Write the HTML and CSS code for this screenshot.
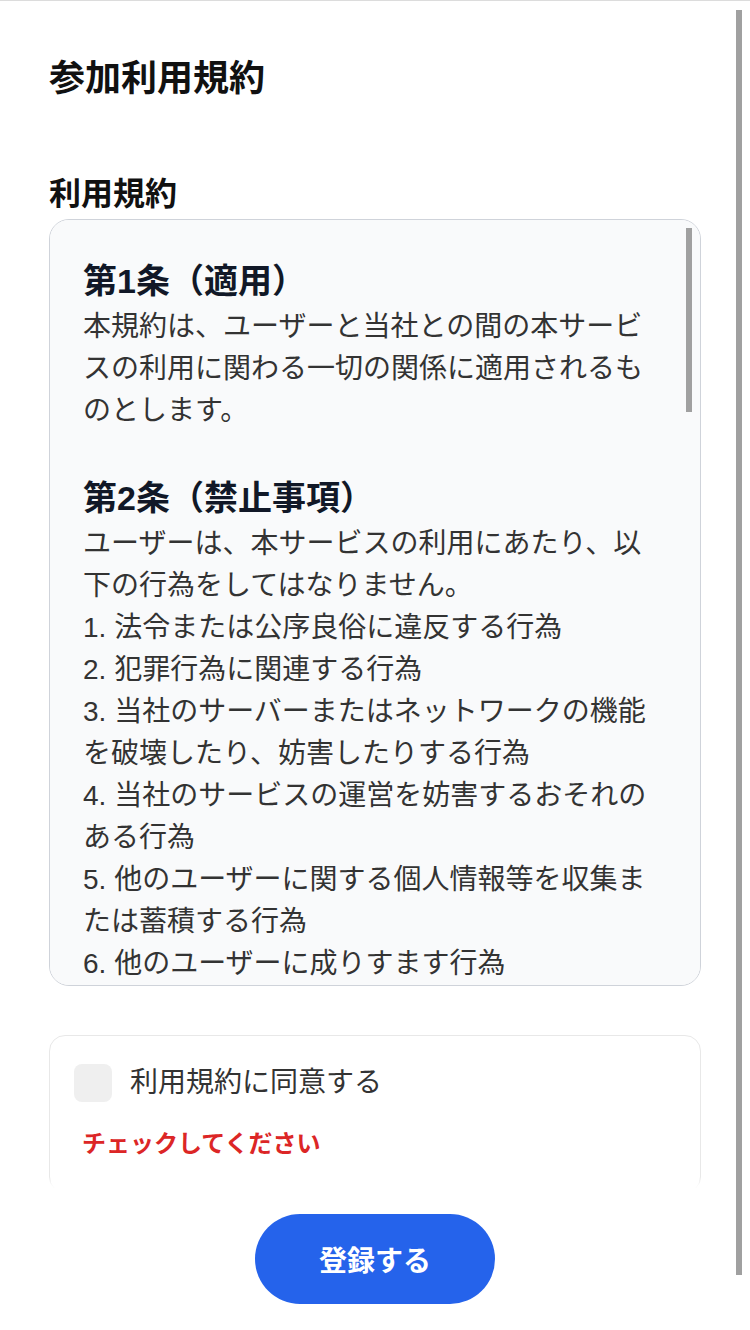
FILE: index.html
```html
<!DOCTYPE html>
<html lang="ja">
<head>
<meta charset="utf-8">
<title>参加利用規約</title>
<link rel="stylesheet" href="styles.css">
</head>
<body>
<main class="page">
  <h1 class="title">参加利用規約</h1>
  <h2 class="label">利用規約</h2>
  <div class="terms-wrap">
    <div class="terms">
      <section class="article">
        <h3 class="article-title">第1条（適用）</h3>
        <p class="text">本規約は、ユーザーと当社との間の本サービスの利用に関わる一切の関係に適用されるものとします。</p>
      </section>
      <section class="article">
        <h3 class="article-title">第2条（禁止事項）</h3>
        <p class="text">ユーザーは、本サービスの利用にあたり、以下の行為をしてはなりません。</p>
        <p class="text">1. 法令または公序良俗に違反する行為</p>
        <p class="text">2. 犯罪行為に関連する行為</p>
        <p class="text">3. 当社のサーバーまたはネットワークの機能を破壊したり、妨害したりする行為</p>
        <p class="text">4. 当社のサービスの運営を妨害するおそれのある行為</p>
        <p class="text">5. 他のユーザーに関する個人情報等を収集または蓄積する行為</p>
        <p class="text">6. 他のユーザーに成りすます行為</p>
        <p class="text">7. 当社のサービスに関連して、反社会的勢力に対して直接または間接に利益を供与する行為</p>
        <p class="text">8. その他、当社が不適切と判断する行為</p>
      </section>
      <section class="article">
        <h3 class="article-title">第3条（本サービスの提供の停止等）</h3>
        <p class="text">当社は、以下のいずれかの事由があると判断した場合、ユーザーに事前に通知することなく本サービスの全部または一部の提供を停止または中断することができるものとします。</p>
        <p class="text">1. 本サービスにかかるコンピュータシステムの保守点検または更新を行う場合</p>
        <p class="text">2. 地震、落雷、火災、停電または天災などの不可抗力により、本サービスの提供が困難となった場合</p>
        <p class="text">3. コンピュータまたは通信回線等が事故により停止した場合</p>
        <p class="text">4. その他、当社が本サービスの提供が困難と判断した場合</p>
      </section>
      <section class="article">
        <h3 class="article-title">第4条（利用制限および登録抹消）</h3>
        <p class="text">当社は、ユーザーが以下のいずれかに該当する場合には、事前の通知なく、ユーザーに対して、本サービスの全部もしくは一部の利用を制限し、またはユーザーとしての登録を抹消することができるものとします。</p>
        <p class="text">1. 本規約のいずれかの条項に違反した場合</p>
        <p class="text">2. 登録事項に虚偽の事実があることが判明した場合</p>
        <p class="text">3. その他、当社が本サービスの利用を適当でないと判断した場合</p>
      </section>
      <section class="article">
        <h3 class="article-title">第5条（免責事項）</h3>
        <p class="text">当社は、本サービスに事実上または法律上の瑕疵がないことを明示的にも黙示的にも保証しておりません。</p>
        <p class="text">当社は、本サービスに起因してユーザーに生じたあらゆる損害について一切の責任を負いません。</p>
      </section>
      <section class="article">
        <h3 class="article-title">第6条（サービス内容の変更等）</h3>
        <p class="text">当社は、ユーザーに通知することなく、本サービスの内容を変更しまたは本サービスの提供を中止することができるものとし、これによってユーザーに生じた損害について一切の責任を負いません。</p>
      </section>
      <section class="article">
        <h3 class="article-title">第7条（利用規約の変更）</h3>
        <p class="text">当社は、必要と判断した場合には、ユーザーに通知することなくいつでも本規約を変更することができるものとします。</p>
      </section>
      <section class="article">
        <h3 class="article-title">第8条（準拠法・裁判管轄）</h3>
        <p class="text">本規約の解釈にあたっては、日本法を準拠法とします。</p>
      </section>
    </div>
    <span class="terms-thumb"></span>
  </div>

  <div class="agree-card">
    <label class="agree-row">
      <span class="checkbox"></span>
      <span class="agree-text">利用規約に同意する</span>
    </label>
    <p class="error">チェックしてください</p>
  </div>
</main>

<footer class="footer">
  <button class="submit" type="button">登録する</button>
</footer>
<span class="page-thumb"></span>
</body>
</html>
```

FILE: styles.css
```css
body {
  margin: 0;
  border-top: 1px solid #dcdcdc;
  background: #ffffff;
  color: #333333;
  font-family: "Liberation Sans", "Noto Sans CJK JP", sans-serif;
}

.page {
  width: 652px;
  margin-left: 49px;
  padding: 51px 0 150px;
}

.title {
  margin: 0;
  font-size: 36px;
  line-height: 54px;
  font-weight: 700;
  color: #111111;
}

.label {
  margin: 64px 0 0;
  font-size: 32px;
  line-height: 48px;
  font-weight: 700;
  color: #111111;
}

.terms-wrap {
  position: relative;
  margin-top: 1px;
}

.terms {
  height: 765px;
  overflow-y: auto;
  scrollbar-width: none;
  border: 1px solid #cfd3da;
  border-radius: 20px;
  background: #f9fafb;
  padding: 0 42px 0 33px;
}

.terms::-webkit-scrollbar {
  display: none;
}

.terms-thumb {
  position: absolute;
  top: 9px;
  right: 9px;
  width: 6px;
  height: 184px;
  background: #a0a0a0;
}

.page-thumb {
  position: fixed;
  top: 10px;
  right: 8px;
  width: 6px;
  height: 1265px;
  background: #a0a0a0;
}

.article:first-child {
  padding-top: 36px;
}

.article + .article {
  margin-top: 41px;
}

.article:last-child {
  padding-bottom: 36px;
}

.article-title {
  margin: 0;
  font-size: 34px;
  line-height: 50px;
  font-weight: 700;
  color: #111827;
}

.text {
  margin: 0;
  font-size: 28px;
  line-height: 42px;
  color: #333333;
}

.agree-card {
  margin-top: 49px;
  border: 1px solid #e8e8e8;
  border-radius: 16px;
  padding: 26px 24px 30px;
  background: #ffffff;
}

.agree-row {
  display: flex;
  align-items: center;
  gap: 18px;
}

.checkbox {
  width: 38px;
  height: 38px;
  border-radius: 8px;
  background: #efefef;
  flex: none;
}

.agree-text {
  font-size: 28px;
  line-height: 42px;
  color: #333333;
}

.error {
  margin: 22px 0 0 8px;
  font-size: 24px;
  line-height: 36px;
  font-weight: 700;
  color: #dc2626;
}

.footer {
  position: fixed;
  left: 0;
  right: 0;
  bottom: 0;
  height: 142px;
  box-sizing: border-box;
  padding: 26px 0;
  display: flex;
  justify-content: center;
  background: #ffffff;
  box-shadow: 0 -6px 6px rgba(255, 255, 255, 0.9);
}

.submit {
  width: 240px;
  height: 90px;
  border: none;
  border-radius: 45px;
  background: #2563eb;
  color: #ffffff;
  font-family: "Liberation Sans", "Noto Sans CJK JP", sans-serif;
  font-size: 28px;
  font-weight: 700;
  cursor: pointer;
}
```
